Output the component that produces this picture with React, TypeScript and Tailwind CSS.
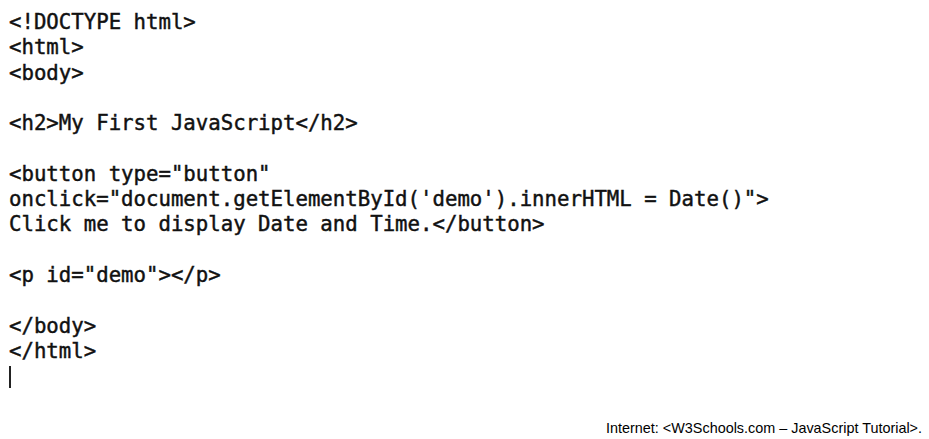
const codeLines = [
  '<!DOCTYPE html>',
  '<html>',
  '<body>',
  '',
  '<h2>My First JavaScript</h2>',
  '',
  '<button type="button"',
  'onclick="document.getElementById(\'demo\').innerHTML = Date()">',
  'Click me to display Date and Time.</button>',
  '',
  '<p id="demo"></p>',
  '',
  '</body>',
  '</html>',
];

const App = () => {
  return (
    <div className="w-[929px] h-[439px] bg-white overflow-hidden flex flex-col">
      <pre className="pl-[9px] pt-[10px] m-0 font-['DejaVu_Sans_Mono',monospace] text-[20.7px] leading-[25.3px] text-[#111] [-webkit-text-stroke:0.45px_#111]">
        {codeLines.map((line, i) => (
          <div key={i} className="h-[25.3px] whitespace-pre">
            {line}
          </div>
        ))}
        <div className="h-[25.3px] flex items-center">
          <span className="block w-[2px] h-[22px] bg-[#222]" />
        </div>
      </pre>
      <div className="flex justify-end pr-[7px] mt-[29px]">
        <p className="font-['Liberation_Sans',Arial,sans-serif] text-[14.4px] text-black">
          Internet: &lt;W3Schools.com – JavaScript Tutorial&gt;.
        </p>
      </div>
    </div>
  );
};

export default App;
